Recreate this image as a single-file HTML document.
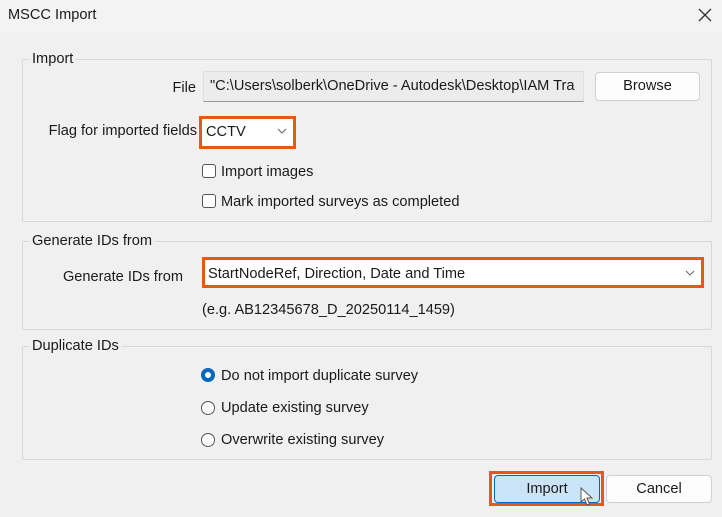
<!DOCTYPE html>
<html><head><style>
*{margin:0;padding:0;box-sizing:border-box}
body{width:722px;height:517px;background:#f0f0f0;font-family:"Liberation Sans",sans-serif;font-size:14.6px;color:#1a1a1a;position:relative;overflow:hidden}
.a{position:absolute;white-space:nowrap}
.r{position:absolute;white-space:nowrap;text-align:right}
.title{left:0;top:0;width:722px;height:32px;background:#f3f3f3}
.grp{position:absolute;border:1px solid #d8d8d8;border-radius:2px}
.lab{background:#f0f0f0;padding:0 3px}
.cb{position:absolute;width:14px;height:14px;border:1px solid #555;border-radius:3px;background:#fff}
.rd{position:absolute;width:14px;height:14px;border:1px solid #555;border-radius:50%;background:#fff}
.btn{position:absolute;border:1px solid #d0d0d0;border-radius:4px;background:#fdfdfd;text-align:center;line-height:27px}
.or{position:absolute;border:3px solid #e8571a}
</style></head><body>
<div class="a title"></div>
<div class="a" style="left:8px;top:7px">MSCC Import</div>
<svg class="a" style="left:698px;top:8px" width="14" height="14"><path d="M1 1L13 13M13 1L1 13" stroke="#333" stroke-width="1.3"/></svg>

<div class="grp" style="left:22px;top:59px;width:690px;height:163px"></div>
<div class="a lab" style="left:29px;top:51px">Import</div>
<div class="r" style="right:526px;top:80px">File</div>
<div class="a" style="left:203px;top:71px;width:381px;height:31px;background:#ececec;border:1px solid #ddd;border-bottom:1px solid #999;padding:6px 0 0 6px;overflow:hidden">"C:\Users\solberk\OneDrive - Autodesk\Desktop\IAM Tra</div>
<div class="btn" style="left:595px;top:72px;width:105px;height:29px">Browse</div>
<div class="r" style="right:525px;top:123px">Flag for imported fields</div>
<div class="or" style="left:199px;top:116px;width:97px;height:33px;background:#fff"></div>
<div class="a" style="left:206px;top:124px">CCTV</div>
<svg class="a" style="left:277px;top:128px" width="10" height="7"><path d="M1 1L5 5L9 1" stroke="#666" fill="none"/></svg>
<div class="cb" style="left:202px;top:164px"></div>
<div class="a" style="left:221px;top:164px">Import images</div>
<div class="cb" style="left:202px;top:194px"></div>
<div class="a" style="left:221px;top:194px">Mark imported surveys as completed</div>

<div class="grp" style="left:22px;top:241px;width:690px;height:89px"></div>
<div class="a lab" style="left:29px;top:233px">Generate IDs from</div>
<div class="r" style="right:539px;top:269px">Generate IDs from</div>
<div class="or" style="left:202px;top:257px;width:502px;height:31px;background:#fff"></div>
<div class="a" style="left:208px;top:266px">StartNodeRef, Direction, Date and Time</div>
<svg class="a" style="left:685px;top:270px" width="10" height="7"><path d="M1 1L5 5L9 1" stroke="#666" fill="none"/></svg>
<div class="a" style="left:202px;top:302px">(e.g. AB12345678_D_20250114_1459)</div>

<div class="grp" style="left:22px;top:346px;width:690px;height:114px"></div>
<div class="a lab" style="left:29px;top:338px">Duplicate IDs</div>
<div class="rd" style="left:201px;top:368px;border:4px solid #0067c0"></div>
<div class="a" style="left:221px;top:368px">Do not import duplicate survey</div>
<div class="rd" style="left:201px;top:401px"></div>
<div class="a" style="left:221px;top:400px">Update existing survey</div>
<div class="rd" style="left:201px;top:433px"></div>
<div class="a" style="left:221px;top:432px">Overwrite existing survey</div>

<div class="or" style="left:489px;top:471px;width:115px;height:35px"></div>
<div class="btn" style="left:494px;top:475px;width:106px;height:28px;background:#cce4f7;border-color:#0067c0">Import</div>
<div class="btn" style="left:606px;top:475px;width:106px;height:28px">Cancel</div>
<svg class="a" style="left:580px;top:487px" width="14" height="20"><path d="M1 1L1 15L4.5 12L7 18L9.5 17L7 11L12 11Z" fill="#fff" stroke="#555"/></svg>
</body></html>
